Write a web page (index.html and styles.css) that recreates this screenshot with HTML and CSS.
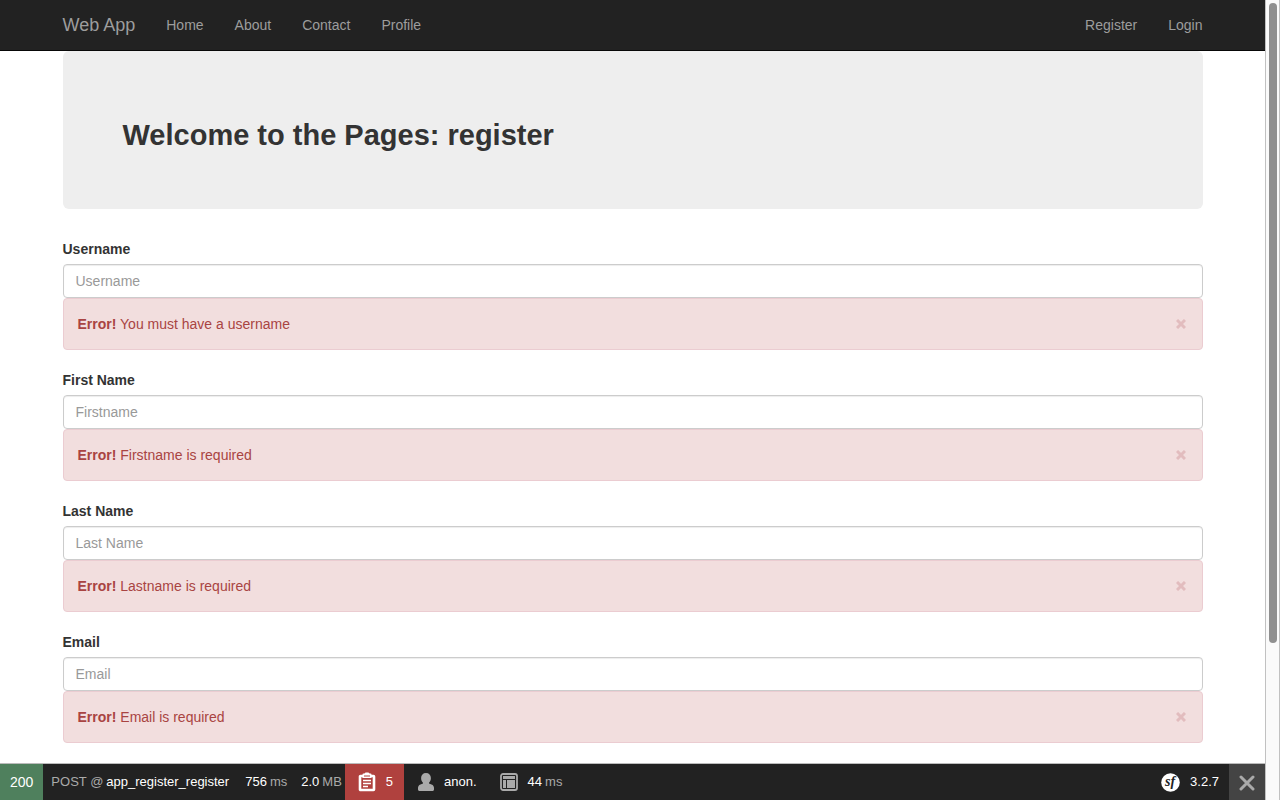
FILE: index.html
```html
<!DOCTYPE html>
<html lang="en">
<head>
<meta charset="utf-8">
<title>Web App - Register</title>
<link rel="stylesheet" href="styles.css">
</head>
<body>
<div class="page">
  <header class="navbar">
    <nav class="container navbar-inner">
      <a class="brand" href="#">Web App</a>
      <ul class="nav">
        <li><a href="#">Home</a></li>
        <li><a href="#">About</a></li>
        <li><a href="#">Contact</a></li>
        <li><a href="#">Profile</a></li>
      </ul>
      <ul class="nav nav-right">
        <li><a href="#">Register</a></li>
        <li><a href="#">Login</a></li>
      </ul>
    </nav>
  </header>

  <main class="content">
    <div class="container">
      <div class="jumbotron"><h2>Welcome to the Pages: register</h2></div>
      <form>
        <div class="form-group">
          <label for="username">Username</label>
          <input class="form-control" id="username" type="text" placeholder="Username">
          <div class="alert" role="alert">
            <span><strong>Error!</strong> You must have a username</span>
            <button class="close" type="button" aria-label="Close"><svg width="10" height="10" viewBox="0 0 10 10"><path d="M1 1l8 8M9 1L1 9"/></svg></button>
          </div>
        </div>
        <div class="form-group">
          <label for="firstname">First Name</label>
          <input class="form-control" id="firstname" type="text" placeholder="Firstname">
          <div class="alert" role="alert">
            <span><strong>Error!</strong> Firstname is required</span>
            <button class="close" type="button" aria-label="Close"><svg width="10" height="10" viewBox="0 0 10 10"><path d="M1 1l8 8M9 1L1 9"/></svg></button>
          </div>
        </div>
        <div class="form-group">
          <label for="lastname">Last Name</label>
          <input class="form-control" id="lastname" type="text" placeholder="Last Name">
          <div class="alert" role="alert">
            <span><strong>Error!</strong> Lastname is required</span>
            <button class="close" type="button" aria-label="Close"><svg width="10" height="10" viewBox="0 0 10 10"><path d="M1 1l8 8M9 1L1 9"/></svg></button>
          </div>
        </div>
        <div class="form-group">
          <label for="email">Email</label>
          <input class="form-control" id="email" type="email" placeholder="Email">
          <div class="alert" role="alert">
            <span><strong>Error!</strong> Email is required</span>
            <button class="close" type="button" aria-label="Close"><svg width="10" height="10" viewBox="0 0 10 10"><path d="M1 1l8 8M9 1L1 9"/></svg></button>
          </div>
        </div>
      </form>
    </div>
  </main>

  <footer class="toolbar">
    <div class="block status">200</div>
    <div class="block route"><span class="muted">POST @</span> app_register_register</div>
    <div class="block time">756 <span class="muted">ms</span></div>
    <div class="block memory">2.0 <span class="muted">MB</span></div>
    <div class="block forms">
      <svg width="18" height="20" viewBox="0 0 18 20" fill="none">
        <rect x="2" y="4" width="14" height="14" rx=".5" stroke="#fff" stroke-width="2.600"/>
        <path d="M4.500 6V2.500q0-1 1-1h1q.5-1 1.500-1h2q1 0 1.500 1h1q1 0 1 1V6z" fill="#fff"/>
        <path d="M6 4h6" stroke="#b0413e"/>
        <path d="M5 8.500h8M5 11.500h8M5 14.500h5" stroke="#fff" stroke-width="1.500"/>
      </svg>5</div>
    <div class="block user">
      <svg width="16" height="18" viewBox="0 0 16 18" fill="#aaa"><path d="M8 0c3 0 4.900 2 4.900 5 0 2-.7 3.700-1.900 4.800v.8l2.500.8c1.800.6 2.500 2 2.500 3.600v1.600q0 1.400-1.200 1.400H1.200Q0 18 0 16.600V15c0-1.600.7-3 2.500-3.600l2.500-.8v-.8C3.800 8.700 3.100 7 3.100 5 3.100 2 5 0 8 0z"/></svg>anon.</div>
    <div class="block render">
      <svg width="18" height="18" viewBox="0 0 18 18" fill="none" stroke="#aaa"><rect x="1" y="1" width="16" height="16" rx="2" stroke-width="1.800"/><path d="M3 3h12v3H3zM3 7h3v8H3zM7 7h8v8H7z" fill="#aaa" stroke="none"/></svg>44 <span class="muted">ms</span></div>
    <div class="block version">
      <svg width="19" height="19" viewBox="0 0 19 19" role="img" aria-label="Symfony"><circle cx="9.500" cy="9.500" r="9.300" fill="#fff"/><text class="logo-text" x="9" y="13" text-anchor="middle">sf</text></svg>3.2.7</div>
    <button class="hide" type="button" aria-label="Close toolbar"><svg width="16" height="16" viewBox="0 0 16 16"><path d="M2 2l12 12M14 2L2 14"/></svg></button>
  </footer>
</div>
<div class="scrollbar"><div class="thumb"></div></div>
</body>
</html>
```
FILE: styles.css
```css
* { box-sizing: border-box; }
body {
  margin: 0;
  display: flex;
  height: 100vh;
  overflow: hidden;
  background: #fff;
  color: #333;
  font: 14px/20px "Helvetica Neue", Helvetica, "Liberation Sans", Arial, sans-serif;
}
.page { flex: 1; min-width: 0; display: flex; flex-direction: column; }
.container { width: 100%; max-width: 1170px; margin: 0 auto; padding: 0 15px; }

.navbar { background: #222; border-bottom: 1px solid #080808; z-index: 1; }
.navbar-inner { display: flex; align-items: center; height: 50px; }
.brand { font-size: 18px; color: #9d9d9d; text-decoration: none; margin-right: 16px; }
.nav { display: flex; gap: 1px; list-style: none; margin: 0; padding: 0; }
.nav a { display: block; padding: 15px; color: #9d9d9d; text-decoration: none; }
.nav-right { margin-left: auto; margin-right: -15px; }

.content { flex: 1; min-height: 0; overflow: hidden; }
.jumbotron { background: #eee; border-radius: 6px; padding: 67px 60px 57px; margin-bottom: 30px; }
.jumbotron h2 { margin: 0; font-size: 29px; line-height: 34px; font-weight: 700; }

.form-group { margin-bottom: 20px; }
.form-group label { display: block; font-weight: 700; margin-bottom: 5px; }
.form-control {
  display: block;
  width: 100%;
  height: 34px;
  padding: 6px 12px;
  border: 1px solid #ccc;
  border-radius: 4px;
  background: #fff;
  box-shadow: inset 0 1px 1px rgba(0, 0, 0, .075);
  font: inherit;
  color: #555;
}
.form-control::placeholder { color: #999; opacity: 1; }
.alert {
  display: flex;
  justify-content: space-between;
  align-items: center;
  padding: 15px 16px 15px 14px;
  border: 1px solid #ebccd1;
  border-radius: 4px;
  background: #f2dede;
  color: #a94442;
}
.close { display: flex; padding: 0; border: 0; background: none; }
.close svg { stroke: #e2bcbe; stroke-width: 3; fill: none; }

.toolbar {
  display: flex;
  height: 37px;
  border-top: 1px solid #bbb;
  background: #222;
  color: #fff;
  font-size: 13px;
}
.block { display: flex; align-items: center; gap: 3px; white-space: nowrap; }
.muted { color: #aaa; }
.status { background: #4f805d; font-size: 14px; padding: 0 10px; }
.route { padding: 0 6px 0 8px; }
.time { padding: 0 5px 0 10px; }
.memory { padding: 0 3px 0 9px; }
.forms { background: #b0413e; gap: 10px; padding: 0 11px 0 13px; }
.user { gap: 10px; padding: 0 12px 0 14px; }
.render { padding: 0 11px; }
.render svg { margin-right: 7px; }
.version { margin-left: auto; gap: 10px; padding: 0 10px; }
.logo-text { font: italic bold 14px "Liberation Serif", serif; fill: #222; }
.hide {
  display: flex;
  align-items: center;
  justify-content: center;
  width: 36px;
  padding: 2px 0 0;
  border: 0;
  background: #444;
}
.hide svg { stroke: #aaa; stroke-width: 3; stroke-linecap: round; fill: none; }

.scrollbar {
  width: 15px;
  padding: 3px 3px 0;
  background: #fafafa;
  border: solid #c1c1c1;
  border-width: 0 1px;
}
.thumb { width: 8px; height: 80vh; border-radius: 4px; background: #8f8f8f; }
```
